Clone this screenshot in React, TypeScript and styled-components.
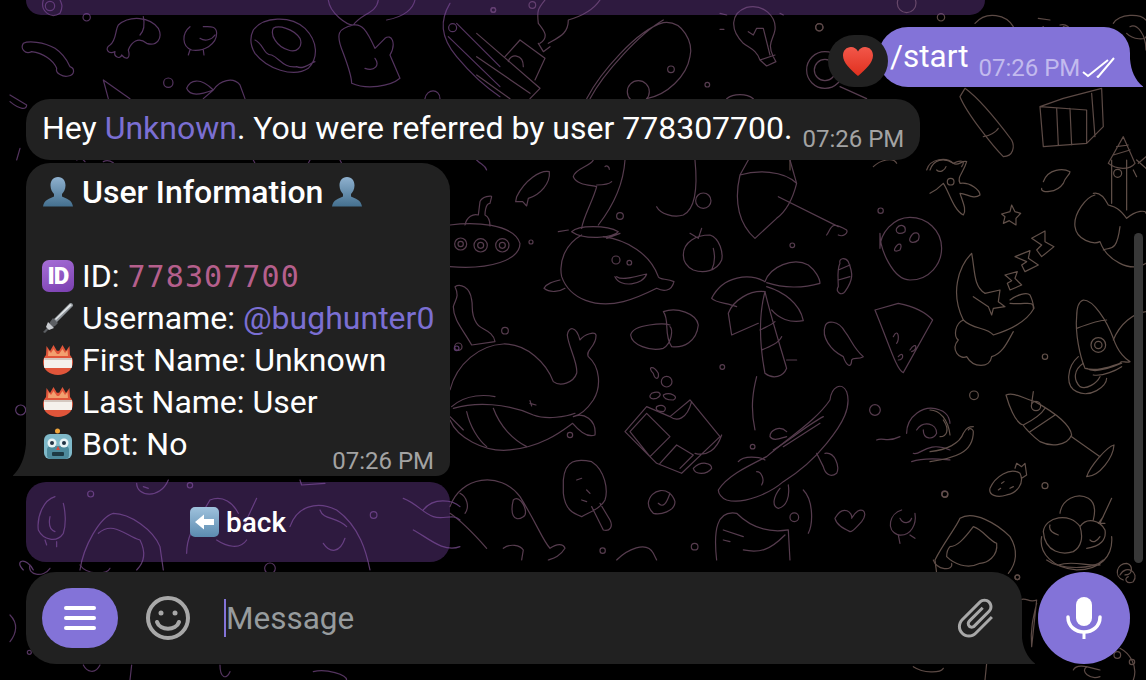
import * as React from 'react';

import styled, { createGlobalStyle } from 'styled-components';

const Color = {
  page: '#000000',
  bubble: '#212121',
  accent: '#8373d8',
  link: '#7b6fd3',
  code: '#b55f8c',
  time: '#a3a3a3',
  band: 'rgba(124, 70, 170, 0.37)',
  icon: '#a8a8a8',
  placeholder: '#979c9e',
};

type Doodle = { x: number; y: number; stroke: string; paths: string[]; dots: number[][] };

// every group is traced at 3x over a crop of the picture, x/y being the crop origin
const DOODLES: Doodle[] = [
  {
    x: 0,
    y: 0,
    stroke: '#54345f',
    paths: [
      'M70 130C85 122 130 125 165 145C195 165 205 190 210 200C225 205 225 225 205 228C190 232 165 220 170 205C160 180 130 160 95 155C75 165 60 145 70 130Z',
      'M355 75C390 45 450 50 475 85C490 115 470 140 440 130C415 110 395 125 385 150C392 175 380 182 365 165C360 180 340 170 345 155C325 165 312 145 330 135C350 120 345 90 355 75ZM430 50C435 75 430 95 420 105',
      'M570 80C545 100 545 140 575 150C610 155 650 135 650 100C650 75 625 80 610 80M600 115C615 125 635 120 645 105M570 150L565 165M610 150L612 165',
      'M760 90C790 50 870 45 915 85C955 125 955 175 925 205C880 235 800 205 765 160C750 135 750 110 760 90ZM765 120C790 130 790 165 815 165C840 175 850 205 890 200C910 210 930 190 945 185M820 85C835 75 880 85 900 115C910 140 890 160 865 150C830 140 810 105 820 85Z',
      'M985 0C990 40 1040 75 1060 75C1085 40 1130 40 1135 0M1060 75C1015 85 1005 100 1030 160C1045 200 1055 235 1055 250C1100 270 1170 260 1200 235L1170 165C1190 130 1175 100 1155 115L1125 145C1100 90 1085 70 1060 75ZM1095 205C1125 215 1140 195 1125 175M1160 60C1215 50 1240 25 1245 0',
      'M1350 10C1320 60 1320 110 1370 170C1420 230 1470 270 1500 290M1370 70L1500 200M1345 110L1500 260',
      'M310 240L390 296M310 240L325 296M560 265C570 240 600 230 640 270C660 240 700 230 720 255L735 296M560 265C570 290 600 285 640 270L610 296M30 285L80 315C80 330 60 330 30 305',
      'M130 0C120 30 150 60 180 40C190 20 185 10 180 0M1275 296C1280 265 1320 265 1320 296',
      'M60 445L50 480M230 480C240 475 250 478 255 485M310 485C320 480 330 482 340 488M760 480L765 490M930 480L925 490M1020 480L1025 490M1430 480C1445 495 1455 495 1460 510',
    ],
    dots: [[505, 248, 14], [260, 52, 11], [1358, 83, 12], [1480, 30, 7], [150, 18, 14]],
  },
  {
    x: 480,
    y: 0,
    stroke: '#573d50',
    paths: [
      'M-10 100L180 265L150 296M-10 170L150 280M-10 225L90 296',
      'M75 170L120 120L195 175L165 240M85 185C90 160 130 160 130 200',
      'M175 130L190 155L210 140M180 130C210 110 190 90 175 70C170 30 175 25 195 0M205 130C240 110 265 100 265 60C300 50 340 30 360 0',
      'M320 296C360 220 470 90 550 68C610 60 640 130 630 170C620 230 560 285 500 296M330 296C370 220 480 100 550 60',
      'M790 130C750 90 750 40 800 22C850 10 890 50 885 90C880 120 860 130 880 170L888 185L860 198L840 180C830 150 810 145 790 130ZM805 95L820 105L830 85L850 85L870 165M840 180L885 165',
      'M740 296C760 280 800 280 820 296M1080 260L1160 296',
      'M720 40L740 45M720 88L732 88M900 40L910 45',
    ],
    dots: [[1018, 82, 11], [682, 254, 7], [573, 208, 10], [475, 275, 33], [1035, 210, 55], [1035, 210, 32], [40, 30, 7], [157, 15, 10]],
  },
  {
    x: 780,
    y: 0,
    stroke: '#5c4a45',
    paths: [
      'M540 290C560 340 640 440 670 470C700 470 705 440 695 420C650 360 590 290 555 265ZM610 410C625 410 650 395 655 385',
      'M780 320L850 295L965 265L970 380L920 430L790 440ZM780 320L920 330L920 430M830 325L835 435M870 325L875 435M935 280L945 410',
      'M775 55L810 60M790 80C770 90 770 100 790 80M840 75C860 70 880 90 850 80M585 70C620 30 680 45 700 80',
      'M1000 70C1020 40 1080 40 1098 60M1050 80C1070 70 1098 100 1098 150M1040 100C1060 120 1098 120 1098 110',
      'M985 490L1030 410L1065 490M985 490C1010 510 1050 510 1065 490M1000 465L1050 450M1010 440L1045 435M1075 490L1098 470',
      'M30 480L30 510M280 500C300 480 340 470 350 490M440 510C450 475 500 470 520 490C540 480 560 480 545 500',
    ],
    dots: [[483, 52, 11], [118, 82, 11], [380, 10, 28]],
  },
  {
    x: 450,
    y: 160,
    stroke: '#563c4e',
    paths: [
      'M45 195C50 170 70 160 85 165L90 125C95 110 125 105 125 110L120 130C105 130 105 165 105 165C115 170 120 185 120 198',
      'M0 195C70 185 190 190 210 250C210 300 120 330 0 320',
      'M200 110C225 60 270 30 298 35C302 70 270 105 235 115L230 138L218 125L197 125Z',
      'M370 50C375 25 420 20 430 0M370 50C380 75 420 75 440 80C430 120 400 170 395 205M445 195C480 150 520 80 525 0M440 75C470 75 480 70 485 65M465 20C470 15 478 20 478 28',
      'M365 215C385 195 470 195 505 215C490 235 400 240 365 215M325 215L355 210M470 235L510 220',
      'M395 225C350 250 325 300 335 350C360 420 440 445 520 425C560 415 600 395 620 385C640 395 665 395 672 365C650 355 630 360 625 350C600 280 530 240 460 230M330 360C310 365 290 370 282 385C300 400 330 395 345 385M500 350C520 365 570 345 590 342C580 375 510 385 495 350',
      'M620 140C630 160 670 175 700 165C730 150 745 100 735 0',
      'M700 285C700 245 740 225 780 225C810 235 820 280 815 300C800 335 760 340 730 330C710 320 700 305 700 285ZM790 265C795 285 795 310 785 330M720 220L745 235L755 205',
      'M1130 225C1145 205 1140 180 1190 210C1195 220 1180 232 1165 225M985 110L1165 200M870 45C850 130 870 195 915 235L980 175C1020 145 1035 90 1040 70C1000 30 920 30 870 45ZM1020 0L1040 70M895 0L870 45',
      'M1170 310C1160 330 1165 360 1165 380C1155 395 1175 410 1185 395C1210 360 1210 340 1195 305C1185 290 1165 295 1170 310ZM1165 330L1200 315M1165 360L1200 350',
      'M945 365C900 340 820 345 785 415C800 430 830 428 860 440M945 395C900 390 850 420 835 460L845 525L925 490',
      'M945 365C960 320 1030 290 1075 315C1095 330 1110 355 1110 370C1060 385 1000 385 950 368M950 380C1000 395 1050 430 1060 482C1020 490 985 475 965 450',
      'M945 395C925 470 930 560 945 640C970 660 1000 650 1010 625C985 540 960 460 945 395ZM930 510C950 500 965 495 975 485M935 570C960 560 985 550 995 530M920 650C910 690 900 740 915 810M1010 600L1040 600',
      'M1125 500C1130 480 1165 480 1185 515C1205 540 1210 565 1240 590C1225 600 1210 590 1205 600C1205 625 1190 620 1180 590C1140 570 1115 530 1125 500Z',
      'M1275 450L1345 430C1395 440 1430 460 1448 480L1360 638C1340 630 1320 560 1275 450ZM1330 530C1345 500 1350 540 1340 550M1345 590C1360 570 1365 600 1345 600M1380 570C1400 540 1405 570 1385 575',
      'M640 455C680 440 740 460 745 495C740 545 700 565 665 560C640 525 660 480 640 455ZM660 495C645 490 550 490 542 525C545 555 600 575 640 565C665 550 670 510 660 500',
      'M1290 220C1290 270 1330 360 1380 360C1440 360 1475 310 1475 265C1475 210 1430 172 1380 172C1330 172 1290 220 1290 265ZM1340 205C1350 190 1370 195 1365 215C1350 225 1335 220 1340 205ZM1380 235C1390 210 1415 215 1405 240C1395 250 1375 250 1380 235ZM1335 265C1345 245 1360 250 1350 270C1340 275 1330 275 1335 265Z',
      'M15 380C30 370 60 380 65 420C70 440 60 460 80 490C90 510 130 510 135 545L65 555C40 510 10 480 10 440C15 420 30 410 15 380Z',
      'M0 690C20 610 90 555 160 552C230 550 290 610 310 665C330 680 370 670 380 640C385 610 355 560 352 525C355 500 378 495 390 540C405 520 435 515 438 525C440 560 405 570 415 590C450 620 455 680 430 720C410 750 390 765 370 770C400 755 440 780 435 825C410 835 385 810 368 790C340 810 280 860 180 870C100 878 20 830 0 780',
      'M5 740C50 700 110 705 135 710M10 745C80 725 170 730 250 765C290 780 350 770 375 760M50 755C60 800 85 840 110 860M130 745C150 800 190 840 230 860M0 770L40 810',
      'M240 730L258 735M245 738L240 722',
      'M590 740L525 815L620 910L695 940L810 830L720 720L660 770ZM540 815L590 760L660 830L600 890ZM630 910L680 855L730 885L690 925M660 770C680 785 710 780 725 725M735 880C770 890 800 870 815 825',
      'M610 640C590 620 610 615 625 640C628 660 615 660 610 640ZM605 700C630 690 640 705 620 715C600 720 595 710 605 700ZM640 705C660 695 690 710 670 720C650 720 640 715 640 705ZM620 740C640 730 655 745 640 755C625 755 615 750 620 740ZM730 925C755 900 785 910 785 925C770 945 735 945 730 925Z',
      'M340 960C345 900 380 895 425 905C465 930 475 990 465 1020C450 1050 410 1060 395 1070C370 1060 345 1050 340 1000ZM425 1040L460 1110C480 1115 490 1100 480 1080L450 1030M380 960L395 955M410 990L420 1000M395 1020L410 1025',
      'M595 1030C600 985 660 975 675 1025C675 1055 630 1065 610 1060C600 1050 595 1040 595 1030ZM625 1030C640 1045 650 1030 660 1000',
      'M0 1040C30 950 150 930 210 1010C260 1090 280 1145 300 1165C320 1150 340 1150 345 1165C330 1190 310 1195 295 1200M190 1020C210 1000 240 1060 220 1070C190 1090 180 1060 190 1020ZM30 1000C50 1010 60 1040 45 1060M0 1060C30 1080 70 1120 110 1165M160 1165C180 1150 210 1155 220 1170L215 1200',
      'M805 990C830 950 880 925 950 890C1020 830 1100 780 1140 720C1145 680 1175 665 1190 695C1205 740 1180 790 1130 850C1090 900 1040 940 1000 965C960 1000 880 1035 830 1020C815 1015 805 1000 805 990Z',
      'M1010 815C990 795 960 810 960 830C970 845 990 835 1010 830M1125 880C1155 875 1170 920 1160 940C1140 955 1125 940 1120 920L1100 880M990 985C970 1010 965 1040 985 1045C1010 1040 1020 1010 1015 975M970 870C1020 840 1080 790 1120 770M1000 860L1110 790M865 905C880 885 930 890 945 900',
      'M920 935C935 935 945 960 935 975M1060 990C1090 1020 1090 1090 1075 1120',
      'M1155 1075C1180 1030 1210 1060 1205 1075C1230 1030 1260 1055 1235 1085C1220 1100 1210 1115 1200 1115C1180 1105 1160 1095 1155 1075Z',
      'M1355 1050C1320 1060 1305 1110 1345 1125C1385 1130 1400 1090 1395 1060M1345 1125L1350 1150M1380 1125L1395 1135M1350 1075C1360 1095 1380 1090 1385 1075',
      'M800 1200C790 1110 800 1050 860 1060C900 1100 950 1120 1015 1110L1020 1200M820 1110L880 1130M820 1140L840 1145M880 1170C930 1180 960 1170 1005 1125',
      'M1280 840C1300 830 1310 850 1350 830M1390 880C1410 890 1430 840 1500 870M1385 905C1430 890 1490 900 1500 900M1370 820C1370 770 1420 730 1470 750C1500 760 1500 790 1500 790M1400 810C1420 780 1460 790 1460 820C1450 840 1420 840 1420 810',
      'M500 1200C530 1170 590 1140 610 1180L620 1200',
    ],
    dots: [
      [32, 252, 18], [32, 252, 8], [92, 256, 20], [92, 256, 9], [157, 256, 20], [157, 256, 9], [243, 246, 6], [510, 168, 10],
      [498, 300, 12], [538, 308, 7], [760, 122, 23], [1027, 256, 7], [165, 512, 10], [25, 560, 11], [817, 621, 7], [650, 665, 16],
      [1275, 750, 16], [360, 825, 8], [908, 860, 7], [1033, 1072, 13], [1292, 152, 8], [734, 1160, 10], [458, 1172, 8], [1484, 1002, 9],
    ],
  },
  {
    x: 930,
    y: 160,
    stroke: '#62514a',
    paths: [
      'M0 30C10 0 40 -10 70 10C85 20 95 0 110 5C100 40 80 50 90 70C120 65 150 90 150 105C130 120 110 100 90 100C100 130 110 150 100 165C70 150 55 90 40 70C20 90 0 100 0 100M20 30C30 40 45 30 48 20',
      'M340 65C355 25 400 25 420 35C420 45 405 50 400 70C380 100 330 100 335 85',
      'M215 162L240 155L245 135L255 155L272 160L258 175L258 195L238 182L220 190L225 170Z',
      'M545 130L545 0M590 150L590 0M620 0L648 25M610 30L620 50',
      'M490 100C510 95 525 115 535 135C550 140 565 140 590 175C620 150 648 150 648 160M495 105C470 110 430 160 435 200C440 240 490 255 510 245C530 300 600 340 648 310M520 270C540 260 560 280 570 200',
      'M125 280C85 320 60 400 100 480C130 510 170 500 190 525C240 510 290 485 312 445C310 420 290 435 240 430M125 280C135 330 130 380 165 400',
      'M165 400L210 390L205 425L225 440L190 445L185 465L175 440L130 410M240 420C260 405 290 395 300 405C312 430 310 440 310 445',
      'M100 480C75 490 70 530 85 540C60 570 90 600 110 590C130 625 180 625 185 590C220 580 235 540 250 515',
      'M225 345L262 335L255 355L275 375L240 390L232 370L245 362ZM255 290L300 272L295 295L325 315L285 335L275 315L290 305ZM305 235L345 213L345 245L372 260L335 290L320 270L335 255Z',
      'M460 420C490 420 530 480 550 535C565 580 590 600 600 605C590 610 570 600 570 610C540 620 500 635 465 625C450 590 435 520 440 470C440 450 445 425 460 420ZM440 505C480 490 520 480 530 480M470 625C490 640 540 625 575 610M490 645C520 650 560 630 575 620',
      'M550 540C570 490 610 460 648 455M445 590C410 620 405 680 440 695C480 715 530 680 530 655M460 610C430 630 430 660 450 680C470 690 500 670 510 650',
      'M228 705C250 695 280 715 315 725C360 750 420 790 425 825C410 860 360 860 330 845C310 830 280 800 280 795C255 790 235 730 228 705ZM280 795C290 790 330 770 345 745M300 815L375 765M310 695L305 730M425 830L510 890M470 950C480 920 530 860 552 855C550 890 510 950 470 950Z',
      'M0 750C30 750 55 780 60 825M0 875C50 870 90 850 100 820C110 800 120 800 130 800M0 905C70 895 130 880 130 815C130 810 120 800 115 810M40 780C60 810 50 830 30 830',
      'M180 985C195 950 240 920 270 940C285 970 260 1000 230 1005C200 1015 175 1005 180 985ZM255 925L260 910L275 920L285 910L290 945L275 955M215 970L222 965M240 985L250 980M205 990L212 985',
      'M15 1200C40 1150 80 1100 90 1075C130 1050 200 1090 240 1130C265 1170 260 1210 235 1240M20 1240L15 1200M60 1160C80 1160 100 1140 130 1100C160 1110 175 1140 200 1150C205 1190 170 1210 150 1210C110 1230 70 1210 50 1190C50 1175 55 1165 60 1160Z',
      'M390 1060C395 1020 440 995 475 1015C500 1030 495 1060 490 1080M340 1115C345 1070 420 1055 450 1100C460 1130 455 1160 430 1175C400 1185 345 1180 340 1115ZM450 1100C470 1070 510 1080 525 1110C530 1140 510 1160 470 1165M335 1130C325 1180 370 1225 440 1230C510 1230 550 1190 545 1130M385 1215C430 1200 470 1220 510 1215M510 1090L545 1015M520 1070L505 1090L525 1090M360 1095C355 1110 370 1120 385 1125M480 1140C490 1150 500 1145 510 1130',
      'M580 1260C550 1250 560 1210 590 1210C610 1215 610 1245 585 1245',
    ],
    dots: [[62, 65, 10], [345, 590, 8], [132, 706, 13], [345, 977, 9], [45, 1003, 9], [262, 1252, 7], [505, 555, 22], [505, 555, 11], [563, 40, 12], [318, 738, 14]],
  },
  {
    x: 0,
    y: 340,
    stroke: '#5b3a6b',
    paths: [
      'M165 470C130 480 110 530 115 570C130 600 170 610 190 580C200 550 195 510 190 490M135 600L140 615M170 605L170 620M150 530C145 555 150 570 165 575',
      'M240 690C250 620 300 530 340 520C390 520 460 570 480 620L490 690M295 580C340 540 380 590 420 600C440 640 430 670 410 690',
      'M410 430C410 470 480 480 505 420M900 420L905 435L975 430M430 440L445 445',
      'M560 640C560 580 590 550 630 480M770 475L730 560M630 480C670 465 700 490 715 520',
      'M870 560C890 500 950 480 1010 510C1080 560 1100 640 1110 690M960 510C970 540 1010 530 1040 560M970 610C990 640 1020 640 1035 595M650 600C680 620 720 630 740 600',
      'M1210 475C1250 490 1270 520 1300 530C1330 540 1360 520 1380 540M1240 570C1280 590 1330 640 1380 620M1270 510C1300 470 1360 480 1380 500',
      'M100 690C80 650 40 660 70 690',
    ],
    dots: [[62, 210, 15], [272, 462, 9], [570, 436, 8], [1121, 525, 10], [1370, 25, 7]],
  },
  {
    x: 0,
    y: 565,
    stroke: '#54345f',
    paths: ['M30 150C55 175 50 205 30 230', 'M250 300C260 320 285 330 300 300', 'M90 0C80 30 130 40 150 10', 'M240 0C260 30 320 30 330 10', 'M395 300L390 345', 'M660 300C660 340 680 345 690 320', 'M940 320C980 310 1040 330 1040 345'],
    dots: [[88, 262, 6], [810, 10, 16]],
  },
  {
    x: 900,
    y: 560,
    stroke: '#5c4a45',
    paths: ['M100 0C110 30 160 35 155 10', 'M440 0C480 30 580 30 610 0', 'M660 45C680 10 720 40 700 65C680 75 670 55 685 50', 'M360 120C380 110 385 130 410 120L395 260C390 210 400 170 410 130', 'M40 320C70 340 120 340 130 325', 'M260 310L255 360', 'M520 330C530 310 560 320 600 330', 'M660 265C690 280 715 320 700 360M560 320C540 335 570 360 600 350'],
    dots: [[352, 52, 7], [696, 306, 8], [652, 285, 10]],
  },
];

const GlobalStyle = createGlobalStyle`
  html,
  body {
    margin: 0;
    background: ${Color.page};
  }
`;

const S = {
  Screen: styled.div`
    position: relative;
    width: 1146px;
    height: 680px;
    overflow: hidden;
    background: ${Color.page};
    color: #fff;
    font-family: Roboto, 'Liberation Sans', sans-serif;
  `,
  Wallpaper: styled.svg`
    position: absolute;
    inset: 0;
    fill: none;
    stroke-width: 3.6;
    stroke-linecap: round;
    stroke-linejoin: round;
  `,
  Scrollbar: styled.div`
    position: absolute;
    top: 233px;
    right: 3px;
    width: 9px;
    height: 330px;
    border-radius: 5px;
    background: #383838;
  `,
  Chat: styled.div`
    position: relative;
    display: flex;
    flex-direction: column;
    padding: 0 16px 0 26px;
  `,
  PreviousButton: styled.div`
    width: 959px;
    height: 15px;
    border-radius: 0 0 24px 24px;
    background: ${Color.band};
  `,
  OutgoingRow: styled.div`
    display: flex;
    justify-content: flex-end;
    margin-top: 12px;
  `,
  Reaction: styled.div`
    position: relative;
    z-index: 1;
    align-self: flex-end;
    display: flex;
    align-items: center;
    justify-content: center;
    width: 60px;
    height: 52px;
    margin-right: -10px;
    border-radius: 26px;
    background: ${Color.bubble};
  `,
  OutgoingBubble: styled.div`
    position: relative;
    display: flex;
    align-items: flex-start;
    width: 252px;
    height: 60px;
    box-sizing: border-box;
    padding: 10px 0 0 12px;
    border-radius: 30px 26px 0 30px;
    background: ${Color.accent};
    font-size: 31.5px;
    line-height: 40px;
  `,
  OutgoingTail: styled.svg`
    position: absolute;
    right: -13px;
    bottom: 0;
    fill: ${Color.accent};
  `,
  OutgoingTime: styled.span`
    margin: 11px 0 0 10px;
    color: #c2baee;
    font-size: 24px;
    line-height: 40px;
  `,
  Ticks: styled.svg`
    margin: 20px 0 0 2px;
    fill: none;
    stroke: #fff;
    stroke-width: 2;
  `,
  ReferredBubble: styled.div`
    display: flex;
    align-items: flex-start;
    align-self: flex-start;
    height: 61px;
    box-sizing: border-box;
    margin-top: 12px;
    padding: 9px 16px 0 16px;
    border-radius: 24px;
    background: ${Color.bubble};
    font-size: 32px;
    line-height: 40px;
    white-space: nowrap;
  `,
  Mention: styled.span`
    color: ${Color.link};
  `,
  Time: styled.span`
    margin: 11px 0 0 10px;
    color: ${Color.time};
    font-size: 24px;
    line-height: 40px;
  `,
  InfoBubble: styled.div`
    position: relative;
    width: 424px;
    height: 313px;
    box-sizing: border-box;
    margin-top: 3px;
    padding: 8px 16px 0;
    border-radius: 24px 28px 14px 0;
    background: ${Color.bubble};
    font-size: 32px;
    line-height: 42px;
    white-space: nowrap;
  `,
  InfoTail: styled.svg`
    position: absolute;
    left: -13px;
    bottom: 0;
    fill: ${Color.bubble};
  `,
  Line: styled.div`
    display: flex;
    align-items: center;
    gap: 8px;
    height: 42px;
  `,
  Title: styled.span`
    font-weight: 500;
  `,
  Code: styled.span`
    color: ${Color.code};
    font-family: 'DejaVu Sans Mono', 'Liberation Mono', monospace;
    font-size: 30px;
    letter-spacing: 1.1px;
  `,
  LineTime: styled.span`
    align-self: flex-end;
    margin: 0 0 -12px auto;
    color: ${Color.time};
    font-size: 24px;
    line-height: 32px;
  `,
  BackButton: styled.div`
    display: flex;
    align-items: center;
    justify-content: center;
    gap: 7px;
    width: 424px;
    height: 80px;
    margin-top: 6px;
    border-radius: 20px;
    background: ${Color.band};
    font-size: 28px;
    font-weight: 500;
  `,
  Composer: styled.div`
    display: flex;
    gap: 16px;
    margin-top: 10px;
  `,
  InputBar: styled.div`
    position: relative;
    flex: 1;
    display: flex;
    align-items: center;
    height: 92px;
    box-sizing: border-box;
    padding: 0 22px 0 16px;
    border-radius: 30px 30px 0 30px;
    background: ${Color.bubble};
  `,
  InputTail: styled.svg`
    position: absolute;
    right: -13px;
    bottom: 0;
    fill: ${Color.bubble};
  `,
  MenuButton: styled.div`
    display: flex;
    flex-direction: column;
    align-items: center;
    justify-content: center;
    gap: 6px;
    width: 76px;
    height: 60px;
    border-radius: 30px;
    background: ${Color.accent};
  `,
  MenuLine: styled.span`
    width: 32px;
    height: 4px;
    border-radius: 2px;
    background: #fff;
  `,
  Smiley: styled.svg`
    margin-left: 28px;
    fill: none;
    stroke: ${Color.icon};
  `,
  Caret: styled.span`
    width: 2px;
    height: 38px;
    margin-left: 34px;
    background: ${Color.accent};
  `,
  Placeholder: styled.span`
    flex: 1;
    color: ${Color.placeholder};
    font-size: 31.5px;
  `,
  Clip: styled.svg`
    transform: rotate(45deg);
    fill: ${Color.icon};
  `,
  MicButton: styled.div`
    display: flex;
    align-items: center;
    justify-content: center;
    width: 92px;
    height: 92px;
    border-radius: 50%;
    background: ${Color.accent};
  `,
  IdBadge: styled.span`
    display: inline-flex;
    align-items: center;
    justify-content: center;
    flex: none;
    width: 32px;
    height: 32px;
    border-radius: 7px;
    background: linear-gradient(160deg, #a66fd6, #7a3fb0);
    font-size: 24px;
    font-weight: 900;
    letter-spacing: -1px;
    line-height: 1;
  `,
  Emoji: styled.svg`
    flex: none;
  `,
};

const Wallpaper = () => (
  <S.Wallpaper width={1146} height={680}>
    {DOODLES.map((doodle) => (
      <g
        key={`${doodle.x}-${doodle.y}`}
        transform={`translate(${doodle.x} ${doodle.y}) scale(0.3333)`}
        stroke={doodle.stroke}
      >
        {doodle.paths.map((d) => (
          <path key={d} d={d} />
        ))}
        {doodle.dots.map(([cx, cy, r]) => (
          <circle key={`${cx}-${cy}-${r}`} cx={cx} cy={cy} r={r} />
        ))}
      </g>
    ))}
  </S.Wallpaper>
);

const PersonEmoji = () => (
  <S.Emoji width={32} height={32} viewBox="0 0 32 32">
    <defs>
      <linearGradient id="person" x1="0" y1="0" x2="0" y2="1">
        <stop offset="0" stopColor="#8fb1cf" />
        <stop offset="1" stopColor="#44708f" />
      </linearGradient>
    </defs>
    <path
      fill="url(#person)"
      d="M16 1c5 0 7.5 4 7.5 8.5 0 4-2 7-3.5 8.5v2.5c4 2 10 3 11 10H1c1-7 7-8 11-10V18c-1.5-1.5-3.5-4.5-3.5-8.5C8.5 5 11 1 16 1Z"
    />
  </S.Emoji>
);

const PenEmoji = () => (
  <S.Emoji width={32} height={32} viewBox="0 0 32 32">
    <path fill="#8e9499" d="M28 1c2-.5 3.5 1 3 3L14 21l-3-3Z" />
    <path fill="#dfe3e6" d="M28 2 13 17l1 1L30 3Z" />
    <path fill="#5c5f63" d="m11 16 5 5-3 3-6 3-4 4-2-1 4-4 3-6Z" />
    <path fill="#c9ccd0" d="m6 20 6 6-5 2-3-3Z" />
  </S.Emoji>
);

const NameBadgeEmoji = () => (
  <S.Emoji width={32} height={32} viewBox="0 0 32 32">
    <path
      fill="#e0553a"
      d="M4 11 4.5 2 8 7l3.5-6L15 7l1-.5L17 7l3.5-6L24 7l3.5-5 .5 9c2 2 3 5 3 7 0 8-7 13-15 13S1 26 1 18c0-2 1-5 3-7Z"
    />
    <path fill="#f2a06f" d="M6 12 6.5 6 9 9l2.5-4L15 10h2l3.5-5L23 9l2.5-3 .5 6Z" />
    <rect x={2} y={14} width={28} height={10} fill="#f5f1ec" rx={1} />
    <rect x={2} y={14} width={28} height={2} fill="#d4c8c0" rx={1} />
  </S.Emoji>
);

const RobotEmoji = () => (
  <S.Emoji width={32} height={32} viewBox="0 0 32 32">
    <circle cx={15.5} cy={3} r={2.5} fill="#f0a53a" />
    <rect x={2} y={6} width={28} height={25} rx={6} fill="#7fb9c9" />
    <rect x={5} y={18} width={22} height={13} rx={4} fill="#4d8a9c" />
    <circle cx={10} cy={15} r={4.5} fill="#e8f3f5" />
    <circle cx={22} cy={15} r={4.5} fill="#e8f3f5" />
    <circle cx={10} cy={15} r={2} fill="#234" />
    <circle cx={22} cy={15} r={2} fill="#234" />
    <path fill="#d8483b" d="m16 18 2 4h-4Z" />
    <rect x={10} y={24} width={12} height={4} rx={1} fill="#1d3a44" />
  </S.Emoji>
);

const BackEmoji = () => (
  <S.Emoji width={29} height={30} viewBox="0 0 29 30">
    <defs>
      <linearGradient id="back" x1="0" y1="0" x2="0" y2="1">
        <stop offset="0" stopColor="#9fc2dd" />
        <stop offset="1" stopColor="#5b8bb0" />
      </linearGradient>
    </defs>
    <rect width={29} height={30} rx={5} fill="url(#back)" />
    <path fill="#fff" d="M5 15 14 7.5V12h10v6H14v4.5Z" />
  </S.Emoji>
);

export default function App() {
  return (
    <S.Screen>
      <GlobalStyle />
      <Wallpaper />
      <S.Scrollbar />
      <S.Chat>
        <S.PreviousButton />

        <S.OutgoingRow>
          <S.Reaction>
            <svg width={32} height={30} viewBox="0 0 32 30">
              <defs>
                <linearGradient id="heart" x1="0" y1="0" x2="0" y2="1">
                  <stop offset="0" stopColor="#f2574a" />
                  <stop offset="1" stopColor="#e0301e" />
                </linearGradient>
              </defs>
              <path
                fill="url(#heart)"
                d="M16 30C9 24 1 17 1 9.5 1 4.5 4.5 1 9 1c3 0 5.5 1.5 7 4.5C17.5 2.5 20 1 23 1c4.5 0 8 3.5 8 8.5C31 17 23 24 16 30Z"
              />
            </svg>
          </S.Reaction>
          <S.OutgoingBubble>
            /start
            <S.OutgoingTime>07:26 PM</S.OutgoingTime>
            <S.Ticks width={33} height={21} viewBox="0 0 33 21">
              <path d="M1 15l5 4L26 3M15 19l1 1L32 1" />
            </S.Ticks>
            <S.OutgoingTail width={13} height={28} viewBox="0 0 13 28">
              <path d="M0 0c1 12 5 21 13 27.5V28H0Z" />
            </S.OutgoingTail>
          </S.OutgoingBubble>
        </S.OutgoingRow>

        <S.ReferredBubble>
          <span>
            Hey <S.Mention>Unknown</S.Mention>. You were referred by user 778307700.
          </span>
          <S.Time>07:26 PM</S.Time>
        </S.ReferredBubble>

        <S.InfoBubble>
          <S.Line>
            <PersonEmoji />
            <S.Title>User Information</S.Title>
            <PersonEmoji />
          </S.Line>
          <S.Line />
          <S.Line>
            <S.IdBadge>ID</S.IdBadge>
            <span>
              ID: <S.Code>778307700</S.Code>
            </span>
          </S.Line>
          <S.Line>
            <PenEmoji />
            <span>
              Username: <S.Mention>@bughunter0</S.Mention>
            </span>
          </S.Line>
          <S.Line>
            <NameBadgeEmoji />
            <span>First Name: Unknown</span>
          </S.Line>
          <S.Line>
            <NameBadgeEmoji />
            <span>Last Name: User</span>
          </S.Line>
          <S.Line>
            <RobotEmoji />
            <span>Bot: No</span>
            <S.LineTime>07:26 PM</S.LineTime>
          </S.Line>
          <S.InfoTail width={13} height={32} viewBox="0 0 13 32">
            <path d="M13 0C12 14 7 25 0 31.5V32h13Z" />
          </S.InfoTail>
        </S.InfoBubble>

        <S.BackButton>
          <BackEmoji />
          back
        </S.BackButton>

        <S.Composer>
          <S.InputBar>
            <S.MenuButton>
              <S.MenuLine />
              <S.MenuLine />
              <S.MenuLine />
            </S.MenuButton>
            <S.Smiley width={44} height={44} viewBox="0 0 44 44">
              <circle cx={22} cy={22} r={20} strokeWidth={4} />
              <circle cx={15} cy={17} r={2.5} fill={Color.icon} stroke="none" />
              <circle cx={29} cy={17} r={2.5} fill={Color.icon} stroke="none" />
              <path d="M11 26c3 9 19 9 22 0" strokeWidth={4} strokeLinecap="round" />
            </S.Smiley>
            <S.Caret />
            <S.Placeholder>Message</S.Placeholder>
            <S.Clip width={48} height={48} viewBox="0 0 24 24">
              <path d="M16.5 6v11.5c0 2.21-1.79 4-4 4s-4-1.79-4-4V5c0-1.38 1.12-2.5 2.5-2.5s2.5 1.12 2.5 2.5v10.5c0 .55-.45 1-1 1s-1-.45-1-1V6H10v9.5c0 1.38 1.12 2.5 2.5 2.5s2.5-1.12 2.5-2.5V5c0-2.21-1.79-4-4-4S7 2.79 7 5v12.5c0 3.04 2.46 5.5 5.5 5.5s5.5-2.46 5.5-5.5V6h-1.5z" />
            </S.Clip>
            <S.InputTail width={13} height={26} viewBox="0 0 13 26">
              <path d="M0 0c1 10 5 19 13 25.5V26H0Z" />
            </S.InputTail>
          </S.InputBar>
          <S.MicButton>
            <svg width={36} height={42} viewBox="0 0 36 42">
              <rect x={10} y={0} width={16} height={29} rx={8} fill="#fff" />
              <path
                d="M2 20c0 9 7 15 16 15s16-6 16-15"
                fill="none"
                stroke="#fff"
                strokeWidth={3.5}
                strokeLinecap="round"
              />
              <rect x={16.5} y={34} width={3} height={8} fill="#fff" />
            </svg>
          </S.MicButton>
        </S.Composer>
      </S.Chat>
    </S.Screen>
  );
}
